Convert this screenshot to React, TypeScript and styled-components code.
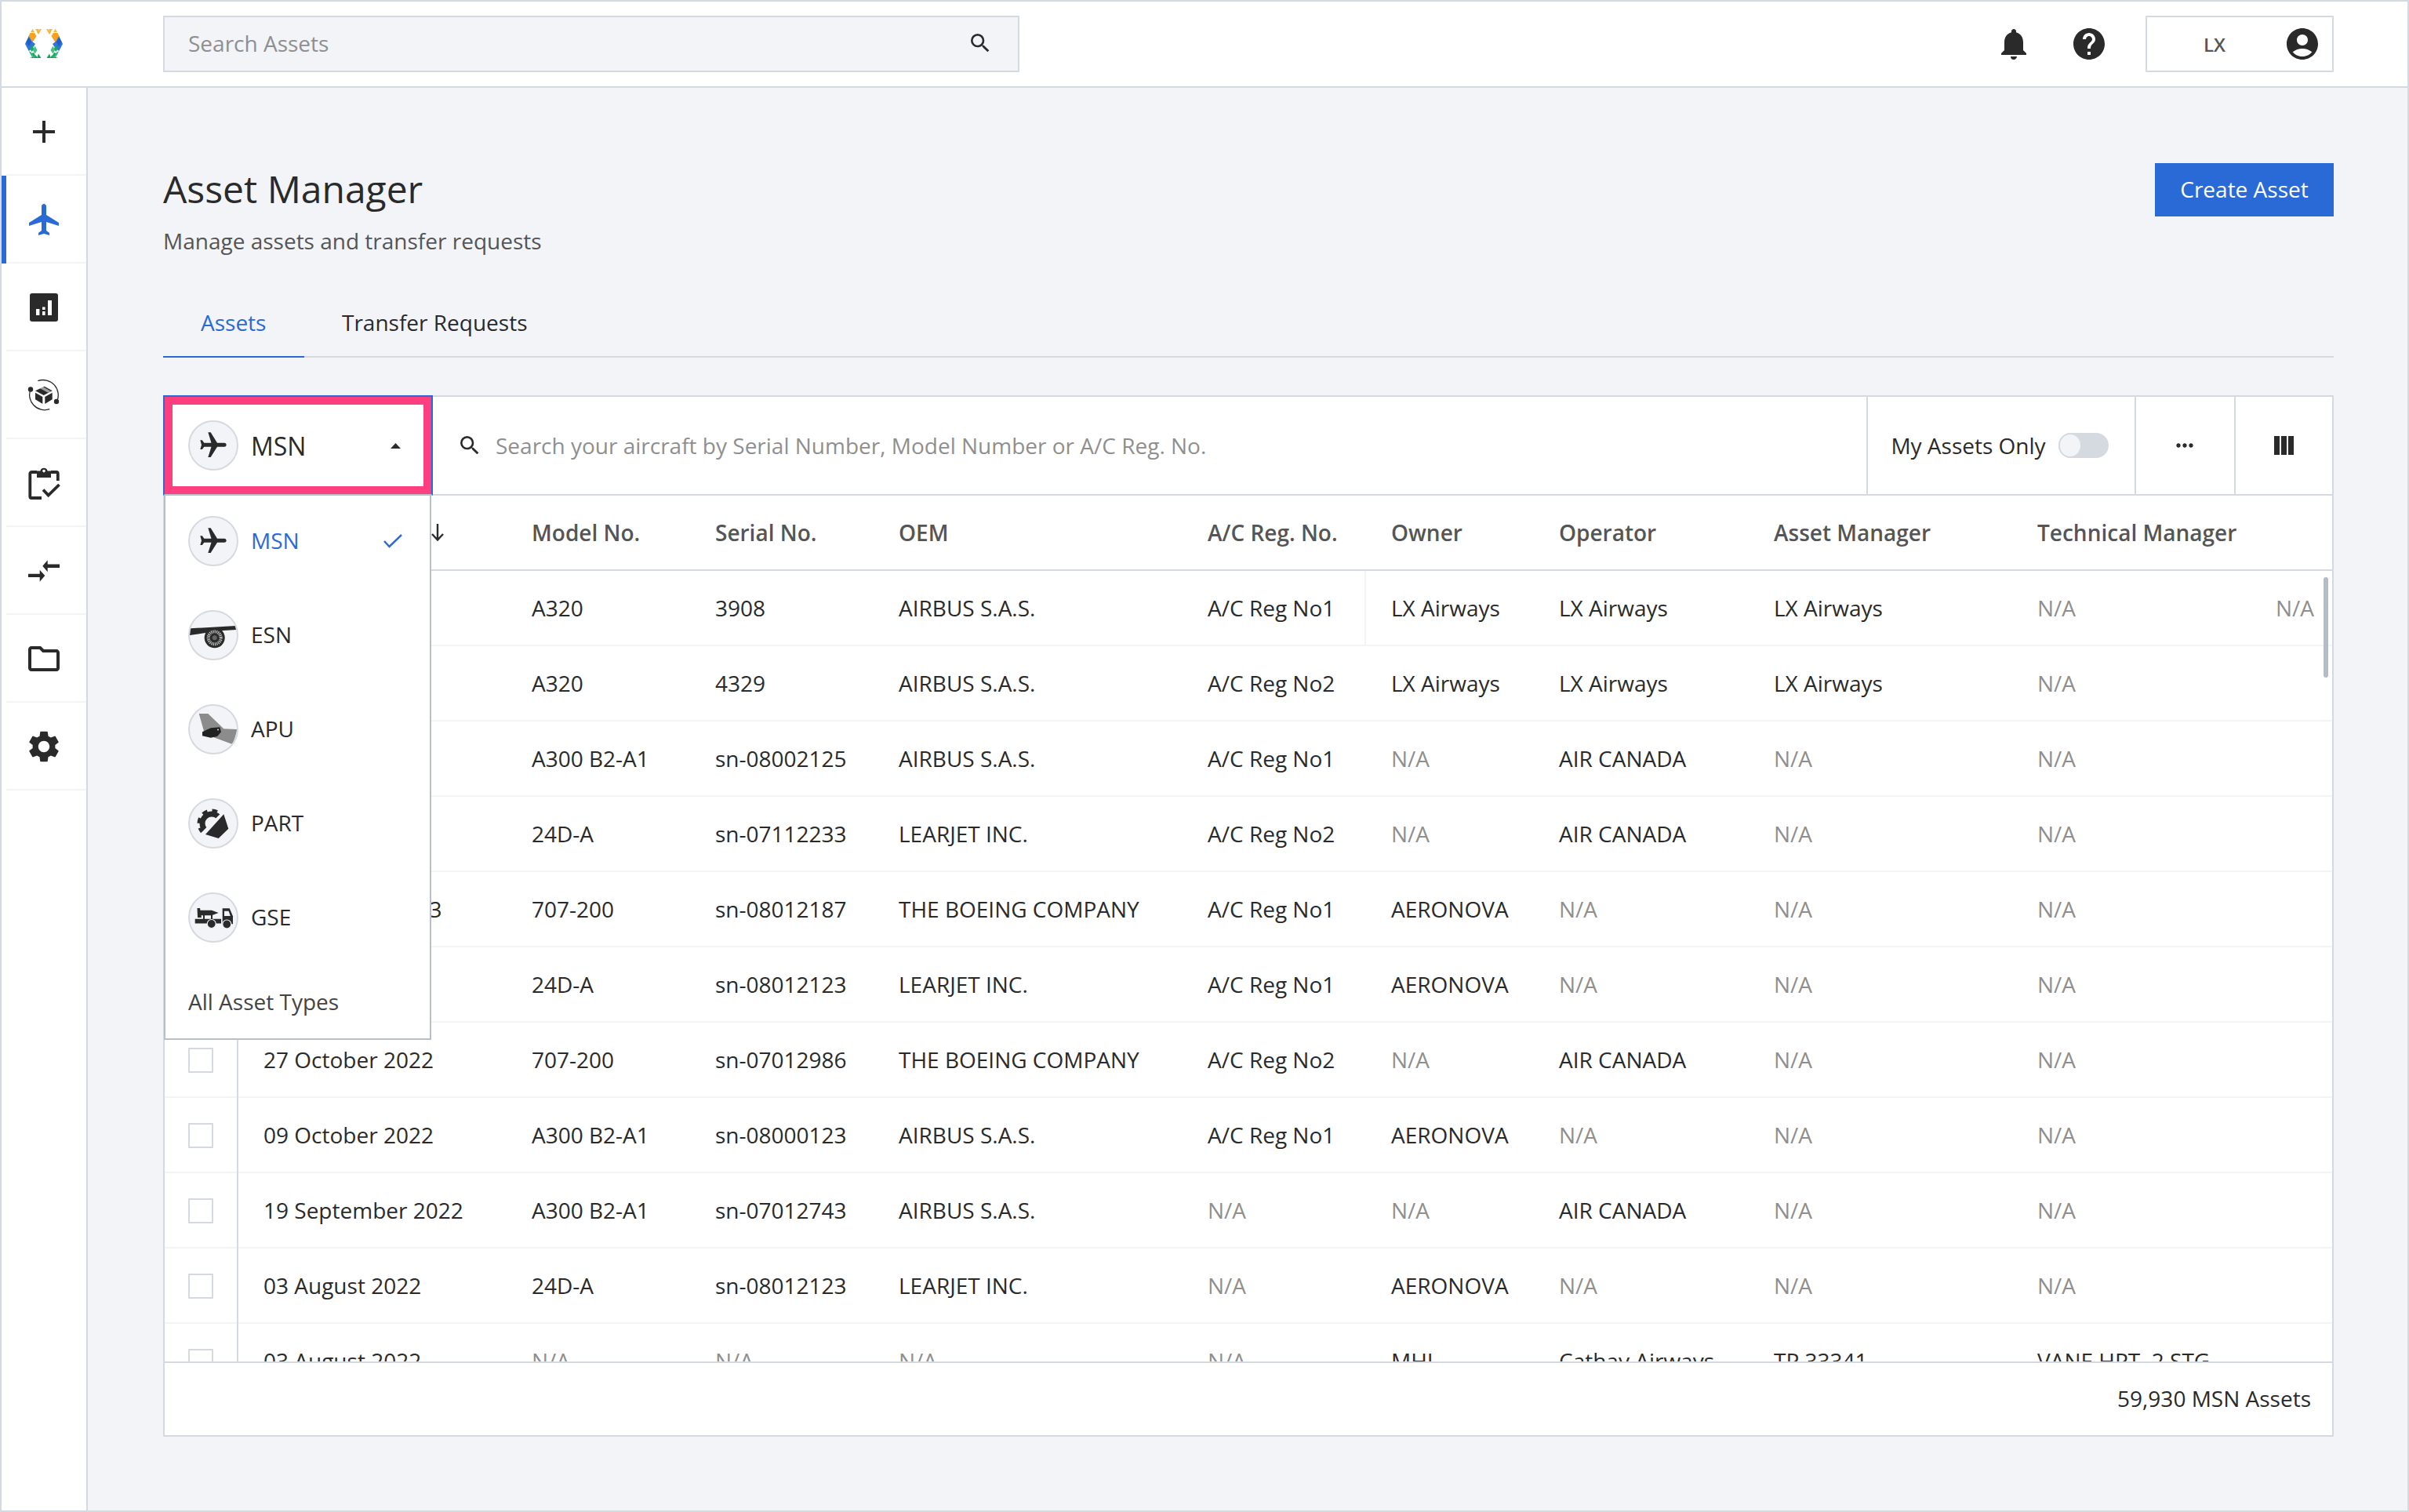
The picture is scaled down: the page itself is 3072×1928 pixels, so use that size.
import React from "react";
import styled, { createGlobalStyle } from "styled-components";
import {
  MdAdd,
  MdFlight,
  MdNotifications,
  MdHelp,
  MdAccountCircle,
  MdSearch,
  MdMoreHoriz,
  MdSettings,
  MdOutlineFolder,
} from "react-icons/md";

const BLUE = "#2a6ad6";
const LINE = "#d5dae1";
const SOFT = "#f2f4f8";
const INK = "#2a2a2a";
const MUTED = "#8f8f8f";

const Global = createGlobalStyle`
  html, body { margin: 0; padding: 0; background: ${SOFT}; }
  * { box-sizing: border-box; }
  body { font-family: "Open Sans", "Noto Sans", sans-serif; font-size: 28px; color: ${INK}; }
`;

const Page = styled.div`
  width: 3072px;
  height: 1928px;
  border: 2px solid ${LINE};
  display: flex;
  flex-direction: column;
  overflow: hidden;
  background: ${SOFT};
`;

const Header = styled.header`
  height: 110px;
  flex: none;
  background: #fff;
  border-bottom: 2px solid ${LINE};
  display: flex;
  align-items: center;
  padding: 0 94px 0 30px;
`;

const LogoBox = styled.div`
  width: 48px;
  height: 38px;
  margin-right: 128px;
  flex: none;
  display: flex;
`;

const HeaderSearch = styled.div`
  width: 1092px;
  height: 72px;
  background: ${SOFT};
  border: 2px solid ${LINE};
  display: flex;
  align-items: center;
  justify-content: space-between;
  padding: 0 32px 2px 30px;
  color: ${MUTED};
  svg { color: ${INK}; }
`;

const HeaderRight = styled.div`
  margin-left: auto;
  display: flex;
  align-items: center;
  gap: 48px;
  svg { display: block; color: ${INK}; }
`;

const UserBox = styled.div`
  width: 240px;
  height: 72px;
  border: 2px solid ${LINE};
  display: flex;
  align-items: center;
  padding-right: 14px;
`;

const UserName = styled.span`
  flex: 1;
  text-align: center;
  font-size: 24px;
  font-weight: 600;
  color: #555;
  padding-right: 2px;
`;

const Body = styled.div`
  flex: 1;
  display: flex;
  min-height: 0;
`;

const Sidebar = styled.nav`
  width: 110px;
  flex: none;
  background: #fff;
  border-right: 2px solid ${LINE};
  display: flex;
  flex-direction: column;
`;

const NavItem = styled.div<{ $active?: boolean }>`
  height: 112px;
  flex: none;
  display: flex;
  align-items: center;
  justify-content: center;
  box-shadow: inset 0 -2px 0 ${SOFT};
  border-left: 6px solid ${(p) => (p.$active ? BLUE : "transparent")};
  padding-right: ${(p) => (p.$active ? "4px" : "6px")};
  color: ${(p) => (p.$active ? BLUE : INK)};
  svg { display: block; }
`;

const Content = styled.main`
  flex: 1;
  min-width: 0;
  padding: 96px 94px 0 96px;
  display: flex;
  flex-direction: column;
`;

const TitleRow = styled.div`
  display: flex;
  justify-content: space-between;
  align-items: flex-start;
`;

const Title = styled.h1`
  margin: 0;
  font-size: 48px;
  line-height: 66px;
  font-weight: 400;
  color: ${INK};
`;

const Subtitle = styled.p`
  margin: 13px 0 0;
  font-size: 28px;
  line-height: 40px;
  color: #555;
`;

const CreateButton = styled.button`
  width: 228px;
  height: 68px;
  border: none;
  background: ${BLUE};
  color: #fff;
  font: inherit;
  font-size: 28px;
  padding: 0 0 2px;
`;

const Tabs = styled.div`
  margin-top: 41px;
  display: flex;
  border-bottom: 2px solid ${LINE};
`;

const Tab = styled.div<{ $active?: boolean }>`
  height: 88px;
  margin-bottom: -2px;
  min-width: 180px;
  padding: 0 48px;
  display: flex;
  align-items: center;
  border-bottom: 2px solid ${(p) => (p.$active ? BLUE : "transparent")};
  color: ${(p) => (p.$active ? BLUE : INK)};
`;

const Card = styled.section`
  margin-top: 48px;
  height: 1328px;
  flex: none;
  border: 2px solid ${LINE};
  background: #fff;
  display: flex;
  flex-direction: column;
`;

const Toolbar = styled.div`
  height: 126px;
  flex: none;
  display: flex;
  border-bottom: 2px solid ${LINE};
`;

const TriggerWrap = styled.div`
  position: relative;
  width: 344px;
  height: 128px;
  margin: -2px 0 0 -2px;
  flex: none;
  z-index: 5;
`;

const Trigger = styled.div`
  height: 100%;
  background: #fff;
  border: 2px solid ${BLUE};
  border-bottom-color: #b8bfc9;
`;

const TriggerInner = styled.div`
  height: 100%;
  border: 10px solid #fd3f80;
  display: flex;
  align-items: center;
  padding: 0 29px 0 20px;
  font-size: 32px;
`;

const TriggerLabel = styled.span`
  margin-left: 16px;
  flex: 1;
`;

const IconCircle = styled.span`
  width: 64px;
  height: 64px;
  flex: none;
  border-radius: 50%;
  border: 2px solid ${LINE};
  background: ${SOFT};
  display: flex;
  align-items: center;
  justify-content: center;
  overflow: hidden;
  svg { display: block; flex: none; }
`;

const SidePlane = styled(MdFlight)`
  transform: rotate(90deg);
  color: ${INK};
`;

const Menu = styled.div`
  position: absolute;
  top: 100%;
  left: 1px;
  width: 341px;
  height: 694px;
  background: #fff;
  border: 2px solid #b8bfc9;
  border-top: none;
  display: flex;
  flex-direction: column;
`;

const MenuItem = styled.div<{ $selected?: boolean }>`
  height: 120px;
  flex: none;
  display: flex;
  align-items: center;
  padding: 0 35px 0 29px;
  color: ${(p) => (p.$selected ? BLUE : INK)};
  &:first-child { margin-top: -2px; }
`;

const MenuLabel = styled.span`
  margin-left: 16px;
  padding-bottom: 2px;
  flex: 1;
`;

const MenuFooter = styled.div`
  height: 94px;
  flex: none;
  display: flex;
  align-items: center;
  padding-left: 29px;
  color: #444;
`;

const ToolSearch = styled.div`
  flex: 1;
  min-width: 0;
  display: flex;
  align-items: center;
  gap: 17px;
  padding-left: 31px;
  color: ${MUTED};
  svg { color: ${INK}; flex: none; }
`;

const ToolCell = styled.div<{ $w: number; $shift?: number }>`
  width: ${(p) => p.$w}px;
  flex: none;
  border-left: 2px solid ${LINE};
  display: flex;
  align-items: center;
  justify-content: center;
  gap: 16px;
  padding-right: ${(p) => p.$shift ?? 0}px;
  color: ${INK};
  svg { display: block; }
`;

const Track = styled.span`
  width: 64px;
  height: 32px;
  flex: none;
  border-radius: 16px;
  background: ${LINE};
  display: flex;
`;

const Thumb = styled.span`
  width: 30px;
  height: 32px;
  border-radius: 50%;
  background: ${SOFT};
  border: 2px solid ${LINE};
`;

const columns = "94px 374px 234px 234px 394px 234px 214px 274px 336px 200px 176px";

const HeadRow = styled.div`
  height: 96px;
  flex: none;
  display: grid;
  grid-template-columns: ${columns};
  border-bottom: 2px solid ${LINE};
`;

const HeadCell = styled.div<{ $first?: boolean }>`
  display: flex;
  align-items: center;
  white-space: nowrap;
  font-weight: 600;
  color: #555;
  padding-left: ${(p) => (p.$first ? "32px" : "0")};
`;

const HeadLabel = styled.span`
  flex: 0 0 214px;
  overflow: hidden;
`;

const TableBody = styled.div`
  position: relative;
  height: 1008px;
  flex: none;
  overflow: hidden;
`;

const Row = styled.div`
  height: 96px;
  display: grid;
  grid-template-columns: ${columns};
  box-shadow: inset 0 -2px 0 ${SOFT};
`;

const CheckCell = styled.div`
  display: flex;
  align-items: center;
  justify-content: center;
  border-right: 2px solid ${LINE};
`;

const Checkbox = styled.span`
  width: 32px;
  height: 32px;
  border: 2px solid ${LINE};
  background: #fff;
`;

const Cell = styled.div<{ $muted?: boolean; $first?: boolean; $divider?: boolean; $end?: boolean }>`
  display: flex;
  align-items: center;
  white-space: nowrap;
  color: ${(p) => (p.$muted ? MUTED : INK)};
  padding-left: ${(p) => (p.$first ? "32px" : "0")};
  padding-bottom: 2px;
  justify-content: ${(p) => (p.$end ? "flex-end" : "flex-start")};
  padding-right: ${(p) => (p.$end ? "23px" : "0")};
  ${(p) => (p.$divider ? `width: 202px; border-right: 2px solid ${SOFT};` : "")}
`;

const ScrollThumb = styled.div`
  position: absolute;
  top: 8px;
  right: 5px;
  width: 6px;
  height: 128px;
  border-radius: 3px;
  background: #b5bcc5;
`;

const Footer = styled.div`
  height: 94px;
  flex: none;
  border-top: 2px solid ${LINE};
  display: flex;
  align-items: center;
  justify-content: flex-end;
  padding: 0 27px 2px 0;
`;

const Logo = () => {
  const half = (
    <>
      <path d="M9.5 0 12 4 7 4ZM13 0H18L15.5 4ZM19 0H21L17 7 15 4Z" fill="#f9b53a" />
      <path d="M6.5 5 12 5 14.5 9 12 13 9.5 17 4.5 9Z" fill="#f7a11e" />
      <path d="M4.7 9 9 16 13 19 9 25 4.7 28 0 19Z" fill="#2f74d8" />
      <path d="M4.7 11 8 16.5 4.7 22 1.6 16.5Z" fill="#1f5fc4" />
      <path d="M6 24.5 9 21 11.5 25.5 8.5 29Z" fill="#19a765" />
      <path d="M4.7 28 8 30 10.5 37H9.5Z" fill="#1fb56f" />
      <path d="M12.5 21.5 15.5 27 12.5 31.5 10 27Z" fill="#3fc486" />
      <path d="M8 31 10.5 35.5 5.5 37H11L13 33.5 11 30Z" fill="#18a860" />
      <path d="M13.5 33 16 37H11ZM17 31.5 20.5 37H15Z" fill="#14a45c" />
    </>
  );
  return (
    <svg width="48" height="38" viewBox="0 0 48 38">
      {half}
      <g transform="translate(48 0) scale(-1 1)">{half}</g>
    </svg>
  );
};

const Chart = () => (
  <svg width="48" height="48" viewBox="0 0 48 48">
    <rect x="6" y="6" width="36" height="36" rx="3" fill={INK} />
    <rect x="14" y="26" width="4.4" height="8" fill="#fff" />
    <rect x="22" y="23.5" width="3.6" height="3.5" fill="#fff" />
    <rect x="22" y="29" width="3.6" height="5" fill="#fff" />
    <rect x="29" y="15" width="5" height="19" fill="#fff" />
  </svg>
);

const BoxOrbit = () => (
  <svg width="48" height="48" viewBox="0 0 48 48" fill="none">
    <path d="M16.3 5.7A19.3 19.3 0 0 1 40.3 32.3" stroke={INK} strokeWidth="1.3" />
    <path d="M7.3 15.7A19.3 19.3 0 0 0 31.3 41.7" stroke={INK} strokeWidth="1.3" />
    <circle cx="7" cy="16.5" r="3.2" fill={INK} />
    <circle cx="40" cy="32" r="3.2" fill={INK} />
    <path d="M13 18.3 24.7 12.7 34.7 18.3 23.7 24Z" fill={INK} />
    <path d="M19 15.2 23 13.3 33 19 29.3 20.8Z" fill="#fff" opacity=".55" />
    <path d="M13 20.7 22.3 26V35L13 29.3Z" fill={INK} />
    <path d="M25.3 26 34.7 20.7V29.3L25.3 35Z" fill={INK} />
  </svg>
);

const Clipboard = () => (
  <svg width="48" height="48" viewBox="0 0 48 48" fill="none">
    <path d="M15 10H8.5A2.2 2.2 0 0 0 6.3 12.2V41A2 2 0 0 0 8.3 43H21" stroke={INK} strokeWidth="3.8" />
    <path d="M33 10H39.8A2 2 0 0 1 41.8 12V21" stroke={INK} strokeWidth="3.8" />
    <path d="M15 8.5h4.4a4.7 4.7 0 0 1 9.2 0H33v8.5H15z" fill={INK} />
    <circle cx="24" cy="8.6" r="1.8" fill="#fff" />
    <path d="M23 32.5 29.7 39.5 43.5 26" stroke={INK} strokeWidth="3.8" />
  </svg>
);

const Transfer = () => (
  <svg width="48" height="48" viewBox="0 0 48 48">
    <path d="M22.3 17.7 28.7 10.3V15.4H44V20H28.7V25.3Z" fill={INK} />
    <path d="M25.3 30 18.7 22.7V27.7H4V32H18.7V37.7Z" fill={INK} />
  </svg>
);

const Columns = () => (
  <svg width="25" height="24" viewBox="0 0 25 24">
    <rect x="0" width="7" height="24" fill={INK} />
    <rect x="9" width="7" height="24" fill={INK} />
    <rect x="18" width="7" height="24" fill={INK} />
  </svg>
);

const Caret = () => (
  <svg width="13" height="7" viewBox="0 0 13 7">
    <path d="M6.5 0 13 7H0Z" fill={INK} />
  </svg>
);

const Tick = () => (
  <svg width="24" height="18" viewBox="0 0 24 18" fill="none">
    <path d="M1 9 7.5 16 23 1" stroke={BLUE} strokeWidth="2.5" />
  </svg>
);

const SortArrow = () => (
  <svg width="16" height="22" viewBox="0 0 16 22" fill="none">
    <path d="M8 0V20M1 13 8 20.5 15 13" stroke={INK} strokeWidth="2.4" />
  </svg>
);

const EsnIcon = () => (
  <svg width="64" height="64" viewBox="0 0 64 64">
    <path d="M2.7 23.3 60.7 20 61.3 25 45.3 26 20.3 29.3 2 32Z" fill={INK} />
    <circle cx="33.7" cy="35.3" r="13" fill={INK} />
    <circle cx="33.7" cy="35.3" r="8" fill="none" stroke="#bdbdbd" strokeWidth="4" strokeDasharray="1.2 1" />
    <circle cx="33.7" cy="35.3" r="3" fill="#666" />
  </svg>
);

const ApuIcon = () => (
  <svg width="64" height="64" viewBox="0 0 64 64">
    <path d="M13.7 12H25.3L45.3 31.3 62.7 32 57 51.3 32 42 20.3 35.3Z" fill="#8c8c8c" />
    <path d="M18 35.3 28.7 30.3 40.3 29.3 42 35.3 37 41 28.7 42.7 18 40.3Z" fill="#222" />
    <circle cx="38" cy="32.5" r="1" fill="#ddd" />
  </svg>
);

const PartIcon = () => (
  <svg width="64" height="64" viewBox="0 0 64 64">
    <defs>
      <clipPath id="gear-half">
        <path d="M0 0H61L0 60Z" />
      </clipPath>
    </defs>
    <g clipPath="url(#gear-half)">
      <circle cx="30" cy="32" r="12" fill="none" stroke={INK} strokeWidth="7" />
      <circle cx="30" cy="32" r="16" fill="none" stroke={INK} strokeWidth="5" strokeDasharray="6.5 6.07" />
    </g>
    <path d="M45.3 20.3 51.3 38.7 38.7 51 22 46Z" fill={INK} />
  </svg>
);

const GseIcon = () => (
  <svg width="64" height="64" viewBox="0 0 64 64">
    <path d="M8.7 33.7H42V39.5H8.7Z" fill={INK} />
    <path d="M43.7 20.3H52.7L57 30.3V40.3H43.7Z" fill={INK} />
    <path d="M46 23.7H51.6L53.8 30H46Z" fill={SOFT} />
    <path d="M13.7 22.7H30L38.7 26 30 29.3H13.7Z" fill={INK} />
    <path d="M11.5 20H15L17 32H12ZM19 29H21V34H19ZM29 29H31V34H29Z" fill={INK} />
    <circle cx="29.7" cy="40" r="5.5" fill={INK} stroke={SOFT} strokeWidth="1.2" />
    <circle cx="49.3" cy="40.5" r="5.5" fill={INK} stroke={SOFT} strokeWidth="1.2" />
  </svg>
);

type RowData = { date: string; cells: string[]; last?: string };

const NA = "N/A";
const rows: RowData[] = [
  { date: "27 June 2023", cells: ["A320", "3908", "AIRBUS S.A.S.", "A/C Reg No1", "LX Airways", "LX Airways", "LX Airways", NA], last: NA },
  { date: "27 June 2023", cells: ["A320", "4329", "AIRBUS S.A.S.", "A/C Reg No2", "LX Airways", "LX Airways", "LX Airways", NA] },
  { date: "15 May 2023", cells: ["A300 B2-A1", "sn-08002125", "AIRBUS S.A.S.", "A/C Reg No1", NA, "AIR CANADA", NA, NA] },
  { date: "15 May 2023", cells: ["24D-A", "sn-07112233", "LEARJET INC.", "A/C Reg No2", NA, "AIR CANADA", NA, NA] },
  { date: "12 February 2023", cells: ["707-200", "sn-08012187", "THE BOEING COMPANY", "A/C Reg No1", "AERONOVA", NA, NA, NA] },
  { date: "11 January 2023", cells: ["24D-A", "sn-08012123", "LEARJET INC.", "A/C Reg No1", "AERONOVA", NA, NA, NA] },
  { date: "27 October 2022", cells: ["707-200", "sn-07012986", "THE BOEING COMPANY", "A/C Reg No2", NA, "AIR CANADA", NA, NA] },
  { date: "09 October 2022", cells: ["A300 B2-A1", "sn-08000123", "AIRBUS S.A.S.", "A/C Reg No1", "AERONOVA", NA, NA, NA] },
  { date: "19 September 2022", cells: ["A300 B2-A1", "sn-07012743", "AIRBUS S.A.S.", NA, NA, "AIR CANADA", NA, NA] },
  { date: "03 August 2022", cells: ["24D-A", "sn-08012123", "LEARJET INC.", NA, "AERONOVA", NA, NA, NA] },
  { date: "03 August 2022", cells: [NA, NA, NA, NA, "MHI", "Cathay Airways", "TP 33341", "VANE HPT, 2 STG"] },
];

const heads = ["Model No.", "Serial No.", "OEM", "A/C Reg. No.", "Owner", "Operator", "Asset Manager", "Technical Manager"];

const menu = [
  { label: "ESN", icon: <EsnIcon /> },
  { label: "APU", icon: <ApuIcon /> },
  { label: "PART", icon: <PartIcon /> },
  { label: "GSE", icon: <GseIcon /> },
];

export default function App() {
  return (
    <>
      <Global />
      <Page>
        <Header>
          <LogoBox>
            <Logo />
          </LogoBox>
          <HeaderSearch>
            <span>Search Assets</span>
            <MdSearch size={32} />
          </HeaderSearch>
          <HeaderRight>
            <MdNotifications size={48} />
            <MdHelp size={48} />
            <UserBox>
              <UserName>LX</UserName>
              <MdAccountCircle size={48} />
            </UserBox>
          </HeaderRight>
        </Header>
        <Body>
          <Sidebar>
            <NavItem>
              <MdAdd size={48} />
            </NavItem>
            <NavItem $active>
              <MdFlight size={48} />
            </NavItem>
            <NavItem>
              <Chart />
            </NavItem>
            <NavItem>
              <BoxOrbit />
            </NavItem>
            <NavItem>
              <Clipboard />
            </NavItem>
            <NavItem>
              <Transfer />
            </NavItem>
            <NavItem>
              <MdOutlineFolder size={48} />
            </NavItem>
            <NavItem>
              <MdSettings size={48} />
            </NavItem>
          </Sidebar>
          <Content>
            <TitleRow>
              <div>
                <Title>Asset Manager</Title>
                <Subtitle>Manage assets and transfer requests</Subtitle>
              </div>
              <CreateButton>Create Asset</CreateButton>
            </TitleRow>
            <Tabs>
              <Tab $active>Assets</Tab>
              <Tab>Transfer Requests</Tab>
            </Tabs>
            <Card>
              <Toolbar>
                <TriggerWrap>
                  <Trigger>
                    <TriggerInner>
                      <IconCircle>
                        <SidePlane size={40} />
                      </IconCircle>
                      <TriggerLabel>MSN</TriggerLabel>
                      <Caret />
                    </TriggerInner>
                  </Trigger>
                  <Menu>
                    <MenuItem $selected>
                      <IconCircle>
                        <SidePlane size={40} />
                      </IconCircle>
                      <MenuLabel>MSN</MenuLabel>
                      <Tick />
                    </MenuItem>
                    {menu.map((m) => (
                      <MenuItem key={m.label}>
                        <IconCircle>{m.icon}</IconCircle>
                        <MenuLabel>{m.label}</MenuLabel>
                      </MenuItem>
                    ))}
                    <MenuFooter>All Asset Types</MenuFooter>
                  </Menu>
                </TriggerWrap>
                <ToolSearch>
                  <MdSearch size={32} />
                  <span>Search your aircraft by Serial Number, Model Number or A/C Reg. No.</span>
                </ToolSearch>
                <ToolCell $w={342} $shift={4}>
                  <span>My Assets Only</span>
                  <Track>
                    <Thumb />
                  </Track>
                </ToolCell>
                <ToolCell $w={127} $shift={2}>
                  <MdMoreHoriz size={32} />
                </ToolCell>
                <ToolCell $w={125}>
                  <Columns />
                </ToolCell>
              </Toolbar>
              <HeadRow>
                <span />
                <HeadCell $first>
                  <HeadLabel>Date Created</HeadLabel>
                  <SortArrow />
                </HeadCell>
                {heads.map((h) => (
                  <HeadCell key={h}>{h}</HeadCell>
                ))}
              </HeadRow>
              <TableBody>
                {rows.map((r, i) => (
                  <Row key={i}>
                    <CheckCell>
                      <Checkbox />
                    </CheckCell>
                    <Cell $first>{r.date}</Cell>
                    {r.cells.map((c, j) => (
                      <Cell key={j} $muted={c === NA} $divider={i === 0 && j === 3}>
                        {c}
                      </Cell>
                    ))}
                    {r.last && (
                      <Cell $muted $end>
                        {r.last}
                      </Cell>
                    )}
                  </Row>
                ))}
                <ScrollThumb />
              </TableBody>
              <Footer>59,930 MSN Assets</Footer>
            </Card>
          </Content>
        </Body>
      </Page>
    </>
  );
}
